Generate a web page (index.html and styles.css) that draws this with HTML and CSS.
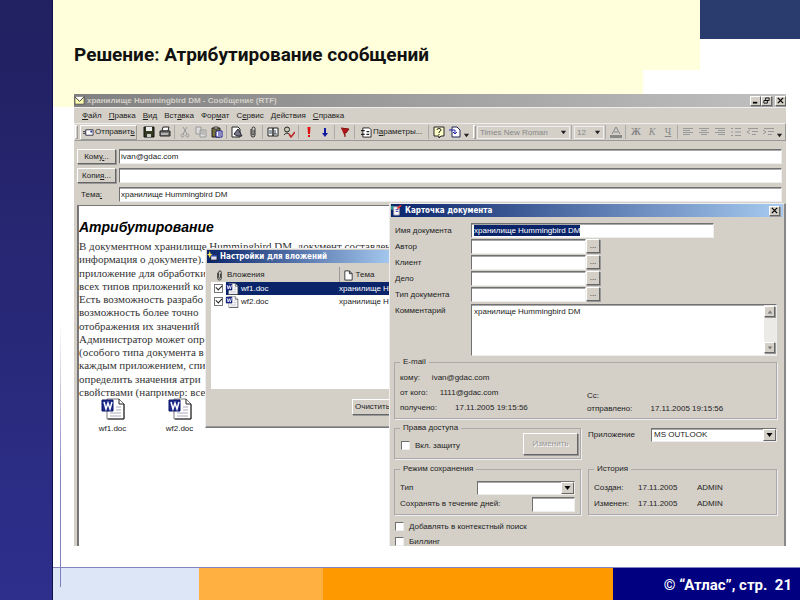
FILE: index.html
```html
<!DOCTYPE html>
<html lang="ru">
<head>
<meta charset="utf-8">
<title>Решение: Атрибутирование сообщений</title>
<link rel="stylesheet" href="styles.css">
</head>
<body>
<svg class="defs" aria-hidden="true">
  <symbol id="doc" viewBox="0 0 24 22">
    <path d="M6 1h12l5 5v15H6z" fill="#fff" stroke="#777"/><path d="M18 1v5h5M23 6v15H7" fill="none" stroke="#222"/>
    <path d="M15 9h5M15 12h5M9 15h11M9 18h11" stroke="#aab"/>
    <path d="M1 2h11v11H1z" fill="#1c2a8c" stroke="#0a1468"/><path d="M3 4l2 7 2-6 2 6 2-7" fill="none" stroke="#fff" stroke-width="1.5"/>
  </symbol>
  <symbol id="down" viewBox="0 0 8 8"><path d="M1 2h6L4 6z" fill="currentColor"/></symbol>
  <symbol id="cross" viewBox="0 0 8 8"><path d="M1 1l6 6M7 1L1 7" stroke="#000" stroke-width="1.5"/></symbol>
  <symbol id="clip" viewBox="0 0 12 12"><path d="M4 3v6q0 2 2 2t2-2V2.500q0-1.500-1.500-1.500T5 2.500V8q0 1 1 1t1-1V4" fill="none" stroke="#333"/></symbol>
</svg>
<div class="slide">
  <div class="rail"></div>
  <main class="stage">
    <header class="head">
      <div class="cream"><h1>Решение: Атрибутирование сообщений</h1></div>
      <div class="corner"></div>
      <div class="cream-low"></div>
    </header>

    <section class="window">
      <div class="titlebar mail-title">
        <svg class="ico" viewBox="0 0 12 12"><path d="M1 2h10v8H1z" fill="#ffffb0" stroke="#555"/><path d="M1 2l5 5 5-5" fill="#fff" stroke="#333"/></svg>
        <span class="grow">хранилище Hummingbird DM - Сообщение (RTF)</span>
        <button class="cap" aria-label="Свернуть"><svg viewBox="0 0 8 8"><path d="M1 6.500h5" stroke="#000" stroke-width="2"/></svg></button>
        <button class="cap" aria-label="Восстановить"><svg viewBox="0 0 8 8"><path d="M3 1h4v3H3zM1 4h4v3H1z" fill="none" stroke="#000"/></svg></button>
        <button class="cap last" aria-label="Закрыть"><svg viewBox="0 0 8 8"><use href="#cross"/></svg></button>
      </div>
      <nav class="menu">
        <a href="#"><u>Ф</u>айл</a><a href="#"><u>П</u>равка</a><a href="#"><u>В</u>ид</a><a href="#">Вст<u>а</u>вка</a><a href="#">Фор<u>м</u>ат</a><a href="#">С<u>е</u>рвис</a><a href="#"><u>Д</u>ействия</a><a href="#"><u>С</u>правка</a>
      </nav>
      <div class="toolbar">
        <i class="grip"></i>
        <button class="send"><svg class="ico" viewBox="0 0 12 12"><path d="M3 3h8v6H3z" fill="#fff" stroke="#334"/><path d="M0 5h3M0 7h3" stroke="#334"/><path d="M8 4h2v2H8z" fill="#23a"/></svg><span>Отправит<u>ь</u></span></button>
        <button class="tool" aria-label="Сохранить"><svg viewBox="0 0 12 12"><path d="M1 1h10v10H1z" fill="#333a20" stroke="#111"/><path d="M3 1h6v4H3z" fill="#eee"/><path d="M4 8h4v3H4z" fill="#ccc"/></svg></button>
        <button class="tool" aria-label="Печать"><svg viewBox="0 0 12 12"><path d="M4 1h6L9 5H3z" fill="#fff" stroke="#222"/><path d="M1 5h10v5H1z" fill="#777" stroke="#222"/><path d="M2 8h7" stroke="#eee"/></svg></button>
        <i class="sep"></i>
        <button class="tool" aria-label="Вырезать"><svg viewBox="0 0 12 12" fill="none" stroke="#999"><path d="M4 1l4 7M8 1L4 8"/><circle cx="3.500" cy="9.500" r="1.500"/><circle cx="8.500" cy="9.500" r="1.500"/></svg></button>
        <button class="tool" aria-label="Копировать"><svg viewBox="0 0 12 12" fill="#ddd" stroke="#999"><path d="M1 1h5v7H1zM5 4h6v7H5zM7 6h3M7 8h3"/></svg></button>
        <button class="tool" aria-label="Вставить"><svg viewBox="0 0 12 12"><path d="M1 2h8v9H1z" fill="#77723a" stroke="#222"/><path d="M3 1h4v2H3z" fill="#ddd" stroke="#333"/><path d="M5 5h6v6H5z" fill="#fff" stroke="#118"/><path d="M7 7h3M7 9h3" stroke="#118"/></svg></button>
        <i class="sep"></i>
        <button class="tool" aria-label="Подпись"><svg viewBox="0 0 12 12"><path d="M1 1h6l2 2v8H1z" fill="#fff" stroke="#222"/><path d="M3 8l4-5 4 7H6z" fill="#778" stroke="#223"/></svg></button>
        <button class="tool" aria-label="Вложить файл"><svg viewBox="0 0 12 12"><use href="#clip"/></svg></button>
        <i class="sep"></i>
        <button class="tool" aria-label="Адресная книга"><svg viewBox="0 0 12 12"><path d="M1 2h5v8H1zM6 2h5v8H6z" fill="#fff" stroke="#222"/><path d="M2 5h3M2 7h3M8 4v4M7 8h3" stroke="#345"/></svg></button>
        <button class="tool" aria-label="Проверить имена"><svg viewBox="0 0 12 12"><circle cx="4" cy="3.500" r="2.500" fill="#ccb" stroke="#222"/><path d="M1 9q3-4 6 0" fill="none" stroke="#222"/><path d="M6 8l2 3 4-5" fill="none" stroke="#b22" stroke-width="1.500"/></svg></button>
        <i class="sep"></i>
        <button class="tool" aria-label="Важно"><svg viewBox="0 0 12 12" fill="#e01010"><path d="M4.500 1h3L7 8H5zM5 9h2v2H5z"/></svg></button>
        <button class="tool" aria-label="Неважно"><svg viewBox="0 0 12 12"><path d="M5 2h2v5h2l-3 4-3-4h2z" fill="#1018a0"/></svg></button>
        <i class="sep"></i>
        <button class="tool" aria-label="Флаг"><svg viewBox="0 0 12 12"><path d="M2 2l8 1-3 4-1-1v5" fill="#b01818" stroke="#801010"/></svg></button>
        <i class="sep"></i>
        <button class="params"><svg class="ico" viewBox="0 0 12 12"><path d="M2 1h7l2 2v8H2z" fill="#fff" stroke="#222"/><path d="M0 4h4M0 8h4M6 5h3M6 8h3" stroke="#222" stroke-width="1.500"/></svg><span>П<u>а</u>раметры...</span></button>
        <i class="sep"></i>
        <button class="tool" aria-label="Справка"><svg viewBox="0 0 12 12"><path d="M1 1h10v9H8l-2 2V10H1z" fill="#ffffc8" stroke="#222"/><path d="M4 4q0-1.500 2-1.500T8 4q0 1-2 2v1M6 8v1" fill="none" stroke="#222"/></svg></button>
        <button class="tool" aria-label="Документ"><svg viewBox="0 0 12 12"><path d="M3 1h5l3 3v7H3z" fill="#fff" stroke="#225"/><path d="M0 4h6v4M4 6l2 2 2-2" fill="none" stroke="#22a"/></svg></button>
        <svg class="more" viewBox="0 0 8 8"><use href="#down"/></svg>
        <i class="grip second"></i>
        <span class="pick wide"><select aria-label="Шрифт" disabled><option>Times New Roman</option></select><svg viewBox="0 0 8 8"><use href="#down"/></svg></span>
        <i class="sep"></i>
        <span class="pick"><select aria-label="Размер" disabled><option>12</option></select><svg viewBox="0 0 8 8"><use href="#down"/></svg></span>
        <i class="sep"></i>
        <button class="tool off" aria-label="Цвет текста"><svg viewBox="0 0 12 12"><path d="M2 8l4-7 4 7M4 6h4" fill="none" stroke="#888"/><path d="M0 9h12v3H0z" fill="#888"/></svg></button>
        <i class="sep"></i>
        <button class="tool off"><b>Ж</b></button>
        <button class="tool off"><em>К</em></button>
        <button class="tool off"><u>Ч</u></button>
        <i class="sep"></i>
        <button class="tool" aria-label="По левому краю"><svg viewBox="0 0 12 12" stroke="#999"><path d="M1 2.500h10M1 4.500h7M1 6.500h10M1 8.500h7"/></svg></button>
        <button class="tool" aria-label="По центру"><svg viewBox="0 0 12 12" stroke="#999"><path d="M1 2.500h10M3 4.500h6M1 6.500h10M3 8.500h6"/></svg></button>
        <button class="tool" aria-label="По правому краю"><svg viewBox="0 0 12 12" stroke="#999"><path d="M1 2.500h10M4 4.500h7M1 6.500h10M4 8.500h7"/></svg></button>
        <button class="tool" aria-label="Маркеры"><svg viewBox="0 0 12 12" stroke="#999"><path d="M1 2.500h2M5 2.500h6M1 6h2M5 6h6M1 9.500h2M5 9.500h6"/></svg></button>
        <button class="tool" aria-label="Уменьшить отступ"><svg viewBox="0 0 12 12" stroke="#999" fill="none"><path d="M2 2.500h10M6 5.500h6M6 8.500h4M4 4L1 6l3 2"/></svg></button>
        <button class="tool" aria-label="Увеличить отступ"><svg viewBox="0 0 12 12" stroke="#999" fill="none"><path d="M2 2.500h10M6 5.500h6M6 8.500h4M1 4l3 2-3 2"/></svg></button>
        <svg class="more" viewBox="0 0 8 8"><use href="#down"/></svg>
      </div>
      <div class="address">
        <button class="btn">Кому<u>.</u>..</button><input type="text" aria-label="Кому" value="ivan@gdac.com">
        <button class="btn">Копи<u>я</u>...</button><input type="text" aria-label="Копия">
        <label for="subject">Тема<u>:</u></label><input type="text" id="subject" value="хранилище Hummingbird DM">
      </div>
      <article class="letter">
        <h2>Атрибутирование</h2>
        <div class="lines">
          <p>В документном хранилище Hummingbird DM, документ составлен</p>
          <p>информация о документе).</p>
          <p>приложение для обработки</p>
          <p>всех типов приложений ко</p>
          <p>Есть возможность разрабо</p>
          <p>возможность более точно</p>
          <p>отображения их значений</p>
          <p>Администратор может опр</p>
          <p>(особого типа документа в</p>
          <p>каждым приложением, спи</p>
          <p>определить значения атри</p>
          <p>свойствами (например: все</p>
        </div>
        <div class="files">
          <figure><svg viewBox="0 0 24 22"><use href="#doc"/></svg><figcaption>wf1.doc</figcaption></figure>
          <figure><svg viewBox="0 0 24 22"><use href="#doc"/></svg><figcaption>wf2.doc</figcaption></figure>
        </div>
      </article>

      <section class="dialog attach">
        <div class="titlebar"><svg class="ico" viewBox="0 0 12 12"><path d="M4 4h7v6H4z" fill="#dde" stroke="#113"/><path d="M4 4h7v2H4z" fill="#24a"/><path d="M3 0l1 3 2 1-2 1-1 3-1-3-2-1 2-1z" fill="#ffe850"/></svg><span>Настройки для вложений</span></div>
        <table class="list">
          <thead><tr><th><span class="cell"><svg class="ico" viewBox="0 0 12 12"><use href="#clip"/></svg>Вложения</span></th><th><span class="cell"><svg class="ico" viewBox="0 0 12 12"><path d="M2 1h5l3 3v7H2zM7 1v3h3" fill="#fff" stroke="#333"/></svg>Тема</span></th></tr></thead>
          <tbody>
            <tr class="on"><td><span class="cell"><input type="checkbox" aria-label="wf1.doc" checked><svg class="wd" viewBox="0 0 24 22"><use href="#doc"/></svg>wf1.doc</span></td><td>хранилище Н.</td></tr>
            <tr><td><span class="cell"><input type="checkbox" aria-label="wf2.doc" checked><svg class="wd" viewBox="0 0 24 22"><use href="#doc"/></svg>wf2.doc</span></td><td>хранилище Н.</td></tr>
          </tbody>
        </table>
        <button class="btn clear">Очистить</button>
      </section>

      <section class="dialog card">
        <div class="titlebar"><svg class="ico" viewBox="0 0 12 12"><path d="M0 1h4v4H0z" fill="#2a9a9a"/><path d="M3 2h6v9H3z" fill="#fff" stroke="#99a"/><path d="M5 5h3M5 7h3" stroke="#33a"/><path d="M7 4l4-4" stroke="#d33" stroke-width="2"/></svg><span class="grow">Карточка документа</span><button class="cap" aria-label="Закрыть карточку"><svg viewBox="0 0 8 8"><use href="#cross"/></svg></button></div>
        <div class="form">
          <label for="f1">Имя документа</label><div class="named"><input type="text" id="f1" size="1" value=""><span class="sel">хранилище Hummingbird DM</span></div>
          <label for="f2">Автор</label><div class="look"><input type="text" id="f2"><button class="btn">...</button></div>
          <label for="f3">Клиент</label><div class="look"><input type="text" id="f3"><button class="btn">...</button></div>
          <label for="f4">Дело</label><div class="look"><input type="text" id="f4"><button class="btn">...</button></div>
          <label for="f5">Тип документа</label><div class="look"><input type="text" id="f5"><button class="btn">...</button></div>
          <label for="f6">Комментарий</label>
          <div class="memo"><textarea id="f6">хранилище Hummingbird DM</textarea><div class="scroll"><button class="btn up" aria-label="Вверх"><svg viewBox="0 0 8 8"><use href="#down"/></svg></button><button class="btn" aria-label="Вниз"><svg viewBox="0 0 8 8"><use href="#down"/></svg></button></div></div>
        </div>
        <fieldset class="email">
          <legend>E-mail</legend>
          <div class="from">
            <p><span>кому:</span><span>ivan@gdac.com</span></p>
            <p><span>от кого:</span><span>1111@gdac.com</span></p>
            <p class="wide"><span>получено:</span><span>17.11.2005 19:15:56</span></p>
          </div>
          <div class="to">
            <p>Cc:</p>
            <p class="wide"><span>отправлено:</span><span>17.11.2005 19:15:56</span></p>
          </div>
        </fieldset>
        <div class="pair">
          <fieldset class="rights"><legend>Права доступа</legend><label class="check"><input type="checkbox">Вкл. защиту</label><button class="btn" disabled>Изменить</button></fieldset>
          <div class="app"><label for="app">Приложение</label><span class="combo"><select id="app"><option>MS OUTLOOK</option></select><svg viewBox="0 0 8 8"><use href="#down"/></svg></span></div>
        </div>
        <div class="pair">
          <fieldset class="mode"><legend>Режим сохранения</legend>
            <div class="row"><label for="kind">Тип</label><span class="combo"><select id="kind"><option></option></select><svg viewBox="0 0 8 8"><use href="#down"/></svg></span></div>
            <div class="row"><label for="days">Сохранять в течение дней:</label><input type="text" id="days"></div>
          </fieldset>
          <fieldset class="history"><legend>История</legend>
            <p><span>Создан:</span><span>17.11.2005</span><span>ADMIN</span></p>
            <p><span>Изменен:</span><span>17.11.2005</span><span>ADMIN</span></p>
          </fieldset>
        </div>
        <label class="check"><input type="checkbox">Добавлять в контекстный поиск</label>
        <label class="check"><input type="checkbox">Биллинг</label>
      </section>
    </section>
  </main>
  <div class="vline"></div>
  <footer class="foot"><i class="pale"></i><i class="amber"></i><i class="orange"></i><span>© “Атлас”, стр.&nbsp; 21</span></footer>
</div>
</body>
</html>
```
FILE: styles.css
```css
* { box-sizing: border-box; }
body { margin: 0; background: #fff; font: 8px/12px "Liberation Sans", sans-serif; color: #222; }
h1, h2, p, figure { margin: 0; }
button, input, select, textarea { font: inherit; color: inherit; margin: 0; padding: 0; border-radius: 0; }
.defs { position: absolute; width: 0; height: 0; }
.grow { flex: 1; }

.slide { position: relative; display: grid; grid-template-columns: 53px 1fr; grid-template-rows: 1fr 33px; height: 100vh; min-height: 500px; overflow: hidden; }
.rail { grid-row: 1 / 3; background: linear-gradient(#212060, #2e2f8d); border-right: 1px solid #10104c; }
.stage { display: flex; flex-direction: column; min-height: 0; }
.vline { position: absolute; left: 60px; top: 320px; bottom: 13px; width: 1px; background: linear-gradient(transparent, #8080bb 60%); }

.head { display: grid; grid-template-columns: 1fr 57px 100px; grid-template-rows: 70px 37px; flex: none; }
.cream { grid-column: 1 / 3; background: #ffffdc; padding: 42px 0 0 21px; }
.cream-low { background: #ffffdc; }
.corner { background: #2a3c6e; height: 39px; }
h1 { font: bold 19px/26px Roboto, "Liberation Sans", sans-serif; color: #111; white-space: nowrap; }

.foot { display: grid; grid-template-columns: 146fr 124fr 290fr 187fr; border-top: 1px solid #8484bb; }
.pale { background: #dce6f7; }
.amber { background: #ffb040; }
.orange { background: #f90; }
.foot span { background: #000080; color: #fff; font: bold 15px/34px Roboto, "Liberation Sans", sans-serif; text-align: right; padding-right: 8px; white-space: nowrap; }

.window { position: relative; flex: 1; min-height: 0; margin: -13px 14px 21px 21px; overflow: hidden; background: #d4d0c8; display: flex; flex-direction: column; }
.titlebar { display: flex; align-items: center; gap: 2px; height: 13px; flex: none; color: #fff; font-weight: bold; font-family: "DejaVu Sans Condensed", sans-serif; white-space: nowrap; background: linear-gradient(90deg, #0a246a, #a6caf0); }
.mail-title { color: #d4d0c8; font-family: "Liberation Sans", sans-serif; background: linear-gradient(90deg, #808080, #c0c0c0); }
.ico { width: 11px; height: 11px; flex: none; }
.btn, .cap { background: #d4d0c8; border: 1px solid; border-color: #fff #666 #666 #fff; box-shadow: 1px 1px 0 #999; text-align: center; }
.cap { width: 11px; height: 10px; display: grid; place-items: center; }
.cap + .cap { margin-left: -2px; }
.cap + .last { margin-left: 1px; }
.cap svg { width: 7px; height: 7px; }

.menu { display: flex; gap: 7px; padding: 2px 0 0 8px; height: 16px; flex: none; border-top: 1px solid #eee; }
.menu a { color: inherit; text-decoration: none; }
.toolbar { display: flex; align-items: center; height: 18px; flex: none; border: 1px solid; border-color: #eee #999 #999 #eee; }
.grip { width: 3px; height: 14px; border: 1px solid; border-color: #fff #999 #999 #fff; margin-right: 2px; }
.second { margin: 0 1px 0 3px; }
.send, .params, .tool { background: none; border: 0; display: flex; align-items: center; }
.send { width: 57px; height: 15px; gap: 1px; padding-left: 2px; border: 1px solid; border-color: #fff #999 #999 #fff; margin-right: 4px; }
.params { width: 70px; gap: 1px; padding-left: 4px; }
.tool { width: 16px; height: 14px; justify-content: center; }
.tool svg { width: 12px; height: 12px; }
.off { color: #888; font: 10px/12px "Liberation Serif", serif; }
.sep { width: 1px; height: 14px; background: #aaa; margin: 0 2px 0 1px; }
.more { width: 7px; height: 7px; margin-top: 6px; }
.pick { position: relative; width: 30px; height: 13px; border: 1px solid #eee; color: #888; }
.pick.wide { width: 93px; }
.pick select { appearance: none; width: 100%; height: 100%; border: 0; background: none; color: #888; opacity: 1; padding-left: 2px; display: block; }
.pick svg { position: absolute; right: 2px; top: 2px; width: 7px; height: 7px; color: #222; }

input[type="text"], textarea, .memo, .combo { background: #fff; border: 1px solid; border-color: #707070 #eee #eee #707070; box-shadow: inset 0 1px 0 #aaa; }
.address { display: grid; grid-template-columns: 39px 1fr; gap: 4px 3px; padding: 8px 4px 3px 3px; }
.address > * { height: 15px; min-width: 0; }
.address input { padding-left: 1px; }
.address label { padding: 2px 4px; }

.letter { flex: 1; min-height: 0; margin-left: 3px; background: #fff; border: 1px solid #777; border-width: 1px 0 0 2px; overflow: hidden; }
.letter h2 { font: italic bold 14px/18px "Liberation Sans", sans-serif; color: #000; margin-top: 12px; }
.lines { display: flex; flex-direction: column; justify-content: space-between; height: 159px; margin-top: 3px; font: 11px/14px "Liberation Serif", serif; color: #333; white-space: nowrap; }
.lines p { height: 13px; }
.files { display: flex; }
.files figure { width: 67px; display: flex; flex-direction: column; align-items: center; }
.files svg { width: 24px; height: 22px; }
figcaption { margin-top: 3px; }

.dialog { position: absolute; background: #d4d0c8; border: 1px solid; border-color: #eee #777 #777 #eee; }
.attach { left: 131px; top: 154px; width: 190px; height: 180px; padding: 1px; box-shadow: inset -1px -1px 0 #999; }
.attach::before { content: ""; position: absolute; left: 5px; right: 0; top: 18px; bottom: 38px; background: #fff; }
.list { position: relative; border-collapse: collapse; table-layout: fixed; width: 188px; height: 41px; margin: 4px 0 0 4px; }
.list th { background: #d4d0c8; font-weight: normal; text-align: left; height: 15px; padding: 1px 0 0; border-right: 1px solid #999; }
.list th:first-child { width: 128px; }
.list td { padding: 0; background: #fff; height: 13px; white-space: nowrap; }
.list .on td { background: #0a246a; color: #fff; }
.list .on td:first-child { background: linear-gradient(90deg, #fff 15px, #0a246a 15px); }
.cell { display: flex; align-items: center; gap: 2px; padding-left: 3px; }
.wd { width: 14px; height: 12px; }
.clear { position: absolute; left: 146px; bottom: 12px; width: 44px; height: 16px; text-align: left; padding-left: 2px; }
input[type="checkbox"] { appearance: none; flex: none; width: 9px; height: 9px; background: #fff; border: 1px solid; border-color: #707070 #eee #eee #707070; }
input[type="checkbox"]:checked { position: relative; border-color: #777; }
input[type="checkbox"]:checked::after { content: ""; position: absolute; left: 1px; top: 0; width: 5px; height: 3px; border: solid #222; border-width: 0 0 1px 1px; transform: rotate(-45deg); }

.card { left: 315px; right: 0; top: 109px; bottom: -8px; padding: 0 7px 0 4px; border-right: 2px solid #888; }
.card .titlebar { margin: 0 -6px 6px -3px; padding-right: 3px; gap: 3px; }
.form { display: grid; grid-template-columns: 73px 1fr; gap: 1px 4px; }
.form > label { padding: 2px 0 0 1px; white-space: nowrap; }
.named { width: 243px; position: relative; height: 15px; }
.named input { width: 100%; height: 15px; display: block; }
.sel { position: absolute; left: 3px; top: 2px; background: #0a246a; color: #fff; line-height: 11px; }
.look { display: flex; height: 15px; }
.look input { width: 115px; }
.look .btn { width: 14px; height: 14px; line-height: 8px; }
.memo { display: flex; height: 52px; margin-top: 1px; }
.memo textarea { flex: 1; border: 0; box-shadow: none; background: none; resize: none; padding: 1px 2px; overflow: hidden; }
.scroll { width: 12px; display: flex; flex-direction: column; justify-content: space-between; background: #eceae6; padding: 1px 1px 2px 0; color: #777; }
.scroll .btn { width: 11px; height: 11px; display: grid; place-items: center; }
.scroll svg { width: 6px; height: 6px; }
.up svg { transform: rotate(180deg); }

fieldset { margin: 0; padding: 0 5px; border: 1px solid #aaa; box-shadow: 1px 1px 0 #eee; min-width: 0; white-space: nowrap; }
legend { padding: 0 3px; height: 10px; line-height: 10px; }
.email { display: flex; height: 62px; margin-top: 1px; }
.from { flex: 1; padding-top: 5px; }
.to { width: 184px; padding-top: 23px; }
.email p { display: flex; gap: 12px; height: 15px; }
.email .wide { gap: 18px; }
.to p { height: 13px; }
.pair { display: grid; grid-template-columns: 187px 1fr; gap: 7px; margin-top: 4px; }
.pair + .pair { margin-top: 5px; }
.rights { display: flex; justify-content: space-between; height: 36px; padding-right: 2px; }
.rights .check { margin-top: 5px; }
.rights .btn { width: 55px; height: 22px; color: #999; text-shadow: 1px 1px 0 #fff; }
.check { display: flex; align-items: center; gap: 5px; height: 15px; padding-left: 1px; }
.app { display: flex; align-items: center; justify-content: space-between; height: 14px; margin-top: 5px; }
.combo { position: relative; width: 126px; height: 14px; }
.combo select { appearance: none; width: 100%; height: 100%; border: 0; background: none; padding-left: 2px; display: block; }
.combo svg { position: absolute; right: 0; top: 0; width: 13px; height: 12px; padding: 1px; background: #d4d0c8; border: 1px solid; border-color: #fff #666 #666 #fff; color: #000; pointer-events: none; }
.mode, .history { height: 51px; padding-top: 2px; }
.row { display: flex; align-items: center; justify-content: space-between; height: 16px; }
.mode .row:nth-of-type(1) { margin-top: 4px; }
.mode .combo { width: 98px; }
.row input { width: 43px; height: 15px; }
.history p { display: grid; grid-template-columns: 44px 59px 1fr; height: 16px; padding-top: 6px; }
.pair + .check { margin-top: 4px; }
```
